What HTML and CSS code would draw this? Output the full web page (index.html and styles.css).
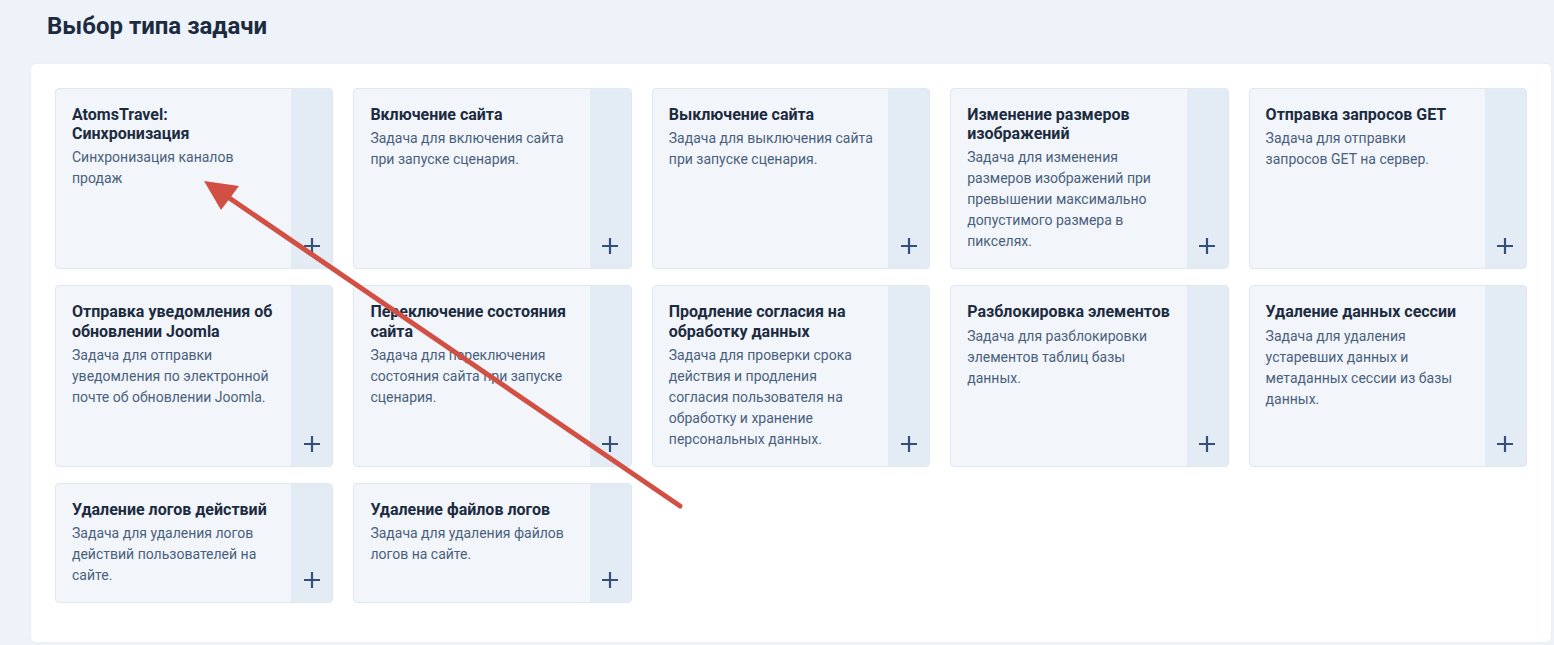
FILE: index.html
```html
<!DOCTYPE html>
<html lang="ru">
<head>
  <meta charset="UTF-8" />
  <meta name="viewport" content="width=device-width, initial-scale=1.0"/>
  <title>Выбор типа задачи</title>
  <link rel="stylesheet" href="styles.css">
</head>
<body>
  <div class="page">
    <h1 class="page-title">Выбор типа задачи</h1>

    <!-- Task type list -->
    <section class="panel">
      <div class="task-grid">
        <a class="task-card" href="#">
          <div class="task-body">
            <h3>AtomsTravel: Синхронизация</h3>
            <p>Синхронизация каналов продаж</p>
          </div>
          <span class="task-add"><svg viewBox="0 0 18 18"><path d="M9 1v16M1 9h16"/></svg></span>
        </a>
        <a class="task-card" href="#">
          <div class="task-body">
            <h3>Включение сайта</h3>
            <p>Задача для включения сайта при запуске сценария.</p>
          </div>
          <span class="task-add"><svg viewBox="0 0 18 18"><path d="M9 1v16M1 9h16"/></svg></span>
        </a>
        <a class="task-card" href="#">
          <div class="task-body">
            <h3>Выключение сайта</h3>
            <p>Задача для выключения сайта при запуске сценария.</p>
          </div>
          <span class="task-add"><svg viewBox="0 0 18 18"><path d="M9 1v16M1 9h16"/></svg></span>
        </a>
        <a class="task-card" href="#">
          <div class="task-body">
            <h3>Изменение размеров изображений</h3>
            <p>Задача для изменения размеров изображений при превышении максимально допустимого размера в пикселях.</p>
          </div>
          <span class="task-add"><svg viewBox="0 0 18 18"><path d="M9 1v16M1 9h16"/></svg></span>
        </a>
        <a class="task-card" href="#">
          <div class="task-body">
            <h3>Отправка запросов GET</h3>
            <p>Задача для отправки запросов GET на сервер.</p>
          </div>
          <span class="task-add"><svg viewBox="0 0 18 18"><path d="M9 1v16M1 9h16"/></svg></span>
        </a>

        <a class="task-card" href="#">
          <div class="task-body">
            <h3>Отправка уведомления об обновлении Joomla</h3>
            <p>Задача для отправки уведомления по электронной почте об обновлении Joomla.</p>
          </div>
          <span class="task-add"><svg viewBox="0 0 18 18"><path d="M9 1v16M1 9h16"/></svg></span>
        </a>
        <a class="task-card" href="#">
          <div class="task-body">
            <h3>Переключение состояния сайта</h3>
            <p>Задача для переключения состояния сайта при запуске сценария.</p>
          </div>
          <span class="task-add"><svg viewBox="0 0 18 18"><path d="M9 1v16M1 9h16"/></svg></span>
        </a>
        <a class="task-card" href="#">
          <div class="task-body">
            <h3>Продление согласия на обработку данных</h3>
            <p>Задача для проверки срока действия и продления согласия пользователя на обработку и хранение персональных данных.</p>
          </div>
          <span class="task-add"><svg viewBox="0 0 18 18"><path d="M9 1v16M1 9h16"/></svg></span>
        </a>
        <a class="task-card" href="#">
          <div class="task-body">
            <h3>Разблокировка элементов</h3>
            <p>Задача для разблокировки элементов таблиц базы данных.</p>
          </div>
          <span class="task-add"><svg viewBox="0 0 18 18"><path d="M9 1v16M1 9h16"/></svg></span>
        </a>
        <a class="task-card" href="#">
          <div class="task-body">
            <h3>Удаление данных сессии</h3>
            <p>Задача для удаления устаревших данных и метаданных сессии из базы данных.</p>
          </div>
          <span class="task-add"><svg viewBox="0 0 18 18"><path d="M9 1v16M1 9h16"/></svg></span>
        </a>

        <a class="task-card" href="#">
          <div class="task-body">
            <h3>Удаление логов действий</h3>
            <p>Задача для удаления логов действий пользователей на сайте.</p>
          </div>
          <span class="task-add"><svg viewBox="0 0 18 18"><path d="M9 1v16M1 9h16"/></svg></span>
        </a>
        <a class="task-card" href="#">
          <div class="task-body">
            <h3>Удаление файлов логов</h3>
            <p>Задача для удаления файлов логов на сайте.</p>
          </div>
          <span class="task-add"><svg viewBox="0 0 18 18"><path d="M9 1v16M1 9h16"/></svg></span>
        </a>
      </div>
    </section>

    <!-- red pointer drawn over the cards -->
    <svg class="pointer" width="1554" height="645" viewBox="0 0 1554 645">
      <line x1="680" y1="506" x2="222" y2="193" />
      <polygon points="204,181 239,186 221,210" />
    </svg>
  </div>
</body>
</html>
```

FILE: styles.css
```css
html, body {
  margin: 0;
  padding: 0;
  background: #eef3fa;
  font-family: Roboto, "Noto Sans", sans-serif;
  color: #1c2b40;
}

.page {
  position: relative;
  padding: 0 3px 3px 31px;
}

.page-title {
  margin: 0;
  padding: 11px 0 0 16px;
  height: 64px;
  box-sizing: border-box;
  font-size: 24px;
  font-weight: 700;
  line-height: 30px;
  color: #1d2b40;
}

.panel {
  width: 1520px;
  box-sizing: border-box;
  background: #fff;
  border-radius: 5px;
  padding: 24px 24px 39px;
  box-shadow: 0 0 2px rgba(30, 60, 110, 0.08);
}

.task-grid {
  display: grid;
  grid-template-columns: repeat(5, 1fr);
  column-gap: 20px;
  row-gap: 16px;
}

.task-card {
  display: flex;
  background: #f2f6fb;
  border: 1px solid #dfe7f1;
  border-radius: 4px;
  overflow: hidden;
  text-decoration: none;
  color: inherit;
}

.task-body {
  flex: 1;
  padding: 16px 14px 16px 16px;
  min-width: 0;
}

.task-body h3 {
  margin: 0 0 4px;
  font-size: 16px;
  font-weight: 700;
  line-height: 19.2px;
  color: #1c2b40;
}

.task-body p {
  margin: 0;
  font-size: 14px;
  line-height: 21px;
  color: #4a5f7b;
}

.task-add {
  width: 41px;
  flex-shrink: 0;
  background: #e3ebf5;
  display: flex;
  align-items: flex-end;
  justify-content: center;
  padding-bottom: 13px;
  box-sizing: border-box;
}

.task-add svg {
  width: 18px;
  height: 18px;
  stroke: #34507a;
  stroke-width: 2.2;
  fill: none;
}

.pointer {
  position: absolute;
  left: 0;
  top: 0;
  pointer-events: none;
}

.pointer line {
  stroke: #d24f44;
  stroke-width: 5;
  stroke-linecap: round;
}

.pointer polygon {
  fill: #d24f44;
}
```
